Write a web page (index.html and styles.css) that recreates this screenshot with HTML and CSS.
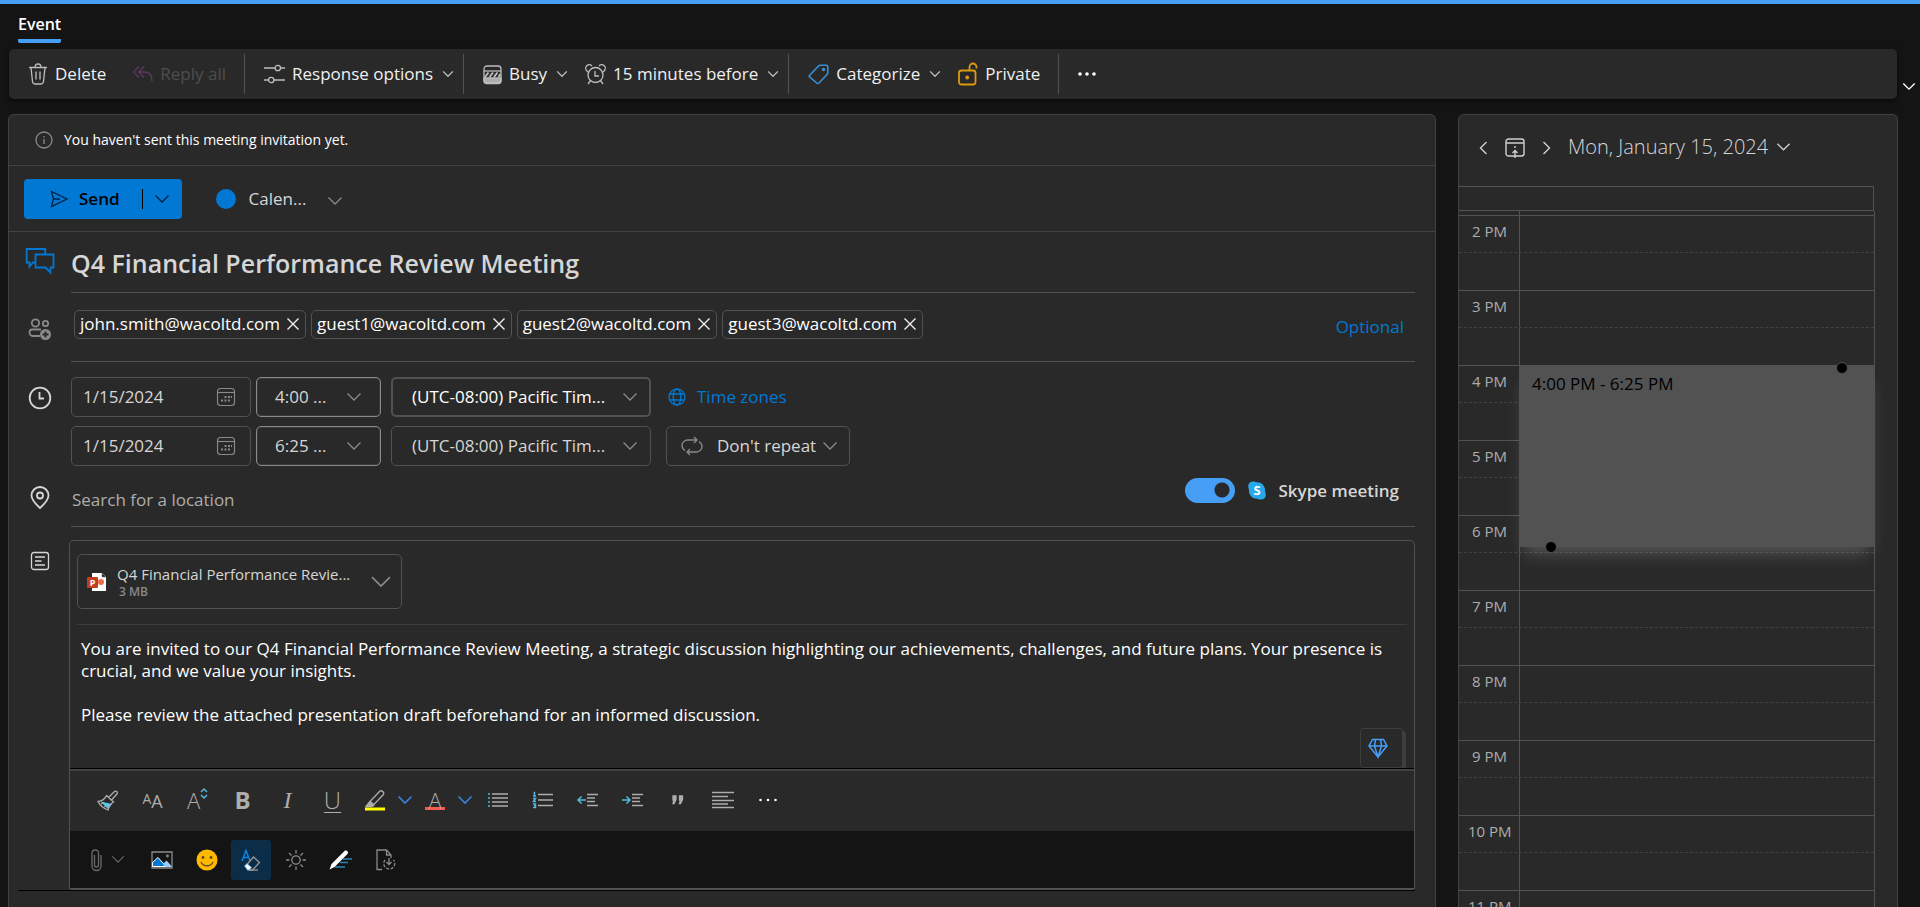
FILE: index.html
```html
<!DOCTYPE html>
<html lang="en">
<head>
<meta charset="utf-8">
<title>Event</title>
<link rel="stylesheet" href="styles.css">
</head>
<body>
<svg class="defs" aria-hidden="true">
  <symbol id="chev" viewBox="0 0 16 10"><path d="M1.500 1.500 8 8l6.500-6.500"/></symbol>
  <symbol id="close" viewBox="0 0 14 14"><path d="M1.500 1.500l11 11M12.500 1.500l-11 11"/></symbol>
  <symbol id="cal" viewBox="0 0 20 20"><rect x="1.500" y="1.500" width="17" height="17" rx="3"/><path d="M1.500 5.500h17"/><path stroke-width="2" d="M8.500 10h2M12 10h2M15 10h1M5 13.500h2M8.500 13.500h2M12 13.500h2"/></symbol>
</svg>
<header class="tabs"><a class="tab" href="#event">Event</a></header>

<div class="ribbon-row">
  <nav class="ribbon" id="event">
    <div class="group">
      <button class="cmd"><svg width="20" height="22" viewBox="0 0 20 22"><path d="M1 4.500h18M7 4.500C7 2 8 1 10 1s3 1 3 3.500M3 4.500l1.500 14c.2 1.500 1 2.500 2.500 2.500h6c1.500 0 2.300-1 2.500-2.500L17 4.500M8 8.500v8M12 8.500v8"/></svg><span>Delete</span></button>
      <button class="cmd disabled" disabled><svg class="purple" width="21" height="18" viewBox="0 0 21 18"><path d="M7 1.500 1.500 7 7 12.500M12 1.500 6.500 7l5.500 5.500M6.500 7h6c5 0 7.500 4 7.500 9.500"/></svg><span>Reply all</span></button>
    </div>
    <div class="group">
      <button class="cmd"><svg width="21" height="20" viewBox="0 0 21 20"><path d="M0 4h11M16.500 4H21M0 16h4.500M10 16h11"/><circle cx="13.800" cy="4" r="2.700"/><circle cx="7.200" cy="16" r="2.700"/></svg><span>Response options</span><svg class="chev" width="12" height="8"><use href="#chev"/></svg></button>
    </div>
    <div class="group">
      <button class="cmd"><svg width="19" height="19" viewBox="0 0 19 19"><path class="fill" d="M1 13h17v3a2.500 2.500 0 0 1-2.500 2.500h-12A2.500 2.500 0 0 1 1 16z"/><rect x="1" y="1" width="17" height="17" rx="3"/><path d="M1 6h17"/><path stroke-width="2" d="M2 12l3.500-4.500M6.500 12 10 7.500M11 12l3.500-4.500M15.500 12l2-3"/></svg><span>Busy</span><svg class="chev" width="12" height="8"><use href="#chev"/></svg></button>
      <button class="cmd"><svg width="21" height="21" viewBox="0 0 21 21"><circle cx="10.500" cy="11" r="7.500"/><path d="M10 7v5h4M5.500 16.500 3 20M15.500 16.500 18 20M1.500 6.500A3.500 3.500 0 0 1 7 2M19.500 6.500A3.500 3.500 0 0 0 14 2M1.500 6.500 3 8M19.500 6.500 18 8"/></svg><span>15 minutes before</span><svg class="chev" width="12" height="8"><use href="#chev"/></svg></button>
    </div>
    <div class="group">
      <button class="cmd"><svg class="blue" width="21" height="21" viewBox="0 0 21 21"><path d="M1.500 11.500 10.500 2c.5-.6 1-.8 1.700-.8h6c1 0 1.600.6 1.600 1.600v6c0 .7-.3 1.200-.8 1.700l-8 8.500c-.7.700-1.600.700-2.300 0l-7-6c-.8-.7-.8-1-.2-1.500z"/><circle cx="15.500" cy="5.500" r="1"/></svg><span>Categorize</span><svg class="chev" width="12" height="8"><use href="#chev"/></svg></button>
      <button class="cmd"><svg class="gold" width="20" height="24" viewBox="0 0 20 24"><rect x="1" y="8.500" width="16.500" height="14" rx="2.500"/><path d="M11.500 8.500V5a3.500 3.500 0 0 1 7 0v1.500"/><circle cx="9.200" cy="15.500" r="1"/></svg><span>Private</span></button>
    </div>
    <div class="group"><button class="cmd" aria-label="More commands"><svg width="18" height="4" viewBox="0 0 18 4"><g class="white-fill"><circle cx="2" cy="2" r="1.800"/><circle cx="9" cy="2" r="1.800"/><circle cx="16" cy="2" r="1.800"/></g></svg></button></div>
  </nav>
  <button class="expand" aria-label="Ribbon options"><svg width="14" height="9"><use href="#chev"/></svg></button>
</div>

<main class="columns">
  <section class="compose">
    <div class="notice"><svg width="18" height="18" viewBox="0 0 18 18"><circle cx="9" cy="9" r="8"/><path d="M9 8v5M9 5v1.500"/></svg><span>You haven't sent this meeting invitation yet.</span></div>
    <div class="sendbar">
      <div class="send">
        <button class="send-main"><svg width="18" height="18" viewBox="0 0 18 18"><path d="M1.500 1.500 17 9 1.500 16.500 3.500 9zM3.500 9H10"/></svg><span>Send</span></button>
        <button class="send-more" aria-label="Send options"><svg width="16" height="10"><use href="#chev"/></svg></button>
      </div>
      <button class="calendar"><i class="dot"></i><span>Calen...</span><svg width="16" height="10"><use href="#chev"/></svg></button>
    </div>

    <form class="form">
      <div class="row">
        <div class="ico"><svg class="accent" width="30" height="28" viewBox="0 0 30 28"><path d="M10 15.500H8l-3.500 4v-4H1.700V2h18.500v4.500M10.500 7.500H28.500V20.500H25.500V25.500L20.500 20.500H10.500z"/></svg></div>
        <div class="field title-field"><input class="title" aria-label="Title" value="Q4 Financial Performance Review Meeting"></div>
      </div>
      <div class="row">
        <div class="ico people"><svg width="24" height="24" viewBox="0 0 24 24"><circle cx="7.500" cy="6" r="3.700"/><circle cx="17.500" cy="6.500" r="2.700"/><path d="M12 19H5.500C3 19 1.500 17.500 1.500 15.500S2.500 12.500 4 12.500h9"/><circle class="fill" cx="17.500" cy="17.500" r="5.500"/><path class="cut" d="M17.500 14.500v6M14.500 17.500h6"/></svg></div>
        <div class="field guests">
          <span class="chip">john.smith@wacoltd.com<button type="button" aria-label="Remove john.smith"><svg width="14" height="14"><use href="#close"/></svg></button></span>
          <span class="chip">guest1@wacoltd.com<button type="button" aria-label="Remove guest1"><svg width="14" height="14"><use href="#close"/></svg></button></span>
          <span class="chip">guest2@wacoltd.com<button type="button" aria-label="Remove guest2"><svg width="14" height="14"><use href="#close"/></svg></button></span>
          <span class="chip">guest3@wacoltd.com<button type="button" aria-label="Remove guest3"><svg width="14" height="14"><use href="#close"/></svg></button></span>
          <a class="optional" href="#optional">Optional</a>
        </div>
      </div>
      <div class="row">
        <div class="ico clock"><svg class="light thick" width="24" height="24" viewBox="0 0 24 24"><circle cx="12" cy="12" r="10.300"/><path d="M11.500 6v6.500H16"/></svg></div>
        <div class="times">
          <div class="time-row">
            <label class="box date"><input aria-label="Start date" value="1/15/2024"><svg width="20" height="20"><use href="#cal"/></svg></label>
            <label class="box time"><select aria-label="Start time"><option>4:00 ...</option></select><svg width="16" height="10"><use href="#chev"/></svg></label>
            <label class="box zone strong"><select aria-label="Start time zone"><option>(UTC-08:00) Pacific Tim...</option></select><svg width="16" height="10"><use href="#chev"/></svg></label>
            <a class="zones" href="#zones"><svg width="18" height="18" viewBox="0 0 18 18"><circle cx="9" cy="9" r="8"/><ellipse cx="9" cy="9" rx="3.800" ry="8"/><path d="M2 6h14M2 12h14"/></svg><span>Time zones</span></a>
          </div>
          <div class="time-row">
            <label class="box date"><input aria-label="End date" value="1/15/2024"><svg width="20" height="20"><use href="#cal"/></svg></label>
            <label class="box time"><select aria-label="End time"><option>6:25 ...</option></select><svg width="16" height="10"><use href="#chev"/></svg></label>
            <label class="box zone"><select aria-label="End time zone"><option>(UTC-08:00) Pacific Tim...</option></select><svg width="16" height="10"><use href="#chev"/></svg></label>
            <label class="box repeat"><svg class="loop" width="22" height="20" viewBox="0 0 22 20"><path d="M4 14.500C1.500 13 1 11 1 9.500 1 6.500 3.500 4 6.500 4h9M13 1l3 3-3 3M18 5.500c2.500 1.500 3 3.500 3 5 0 3-2.500 5.500-5.500 5.500h-9M9 13l-3 3 3 3"/></svg><select aria-label="Repeat"><option>Don't repeat</option></select><svg width="16" height="10"><use href="#chev"/></svg></label>
          </div>
        </div>
      </div>
      <div class="row">
        <div class="ico pin"><svg class="light thick" width="20" height="24" viewBox="0 0 20 24"><path d="M10 22C5 17.500 1.500 14 1.500 9.500a8.500 8.500 0 0 1 17 0C18.500 14 15 17.500 10 22z"/><circle cx="10" cy="9.500" r="3"/></svg></div>
        <div class="field location">
          <input aria-label="Location" placeholder="Search for a location">
          <label class="skype"><input type="checkbox" checked><svg width="18" height="19" viewBox="0 0 18 19"><path fill="#28a8ea" stroke="none" d="M5 .5c2 0 2.500.7 4 .7 4.500 0 8 3.500 8 8 0 1.500.8 2.500.8 4.500 0 2.800-2 4.800-4.800 4.800-2 0-2.500-.8-4-.8-4.500 0-8-3.500-8-8 0-1.500-.8-2.500-.8-4.400C.2 2.500 2.200.5 5 .5z"/><text x="9" y="14" text-anchor="middle" font-size="13">S</text></svg><span>Skype meeting</span></label>
        </div>
      </div>
      <div class="row editor-row">
        <div class="ico note"><svg class="light" width="20" height="20" viewBox="0 0 20 20"><rect x="1.500" y="1.500" width="17" height="17" rx="2.500"/><path d="M5 6h10M5 10h6.500M5 14h10"/></svg></div>
        <div class="editor">
          <div class="attachments">
            <button type="button" class="attachment">
              <svg width="20" height="20" viewBox="0 0 20 20"><path fill="#fff" stroke="none" d="M5 1h10l4 4v14H5z"/><path fill="#292929" stroke="#777" stroke-width=".6" d="M15 1v4h4z"/><circle cx="14" cy="10" r="3" fill="#f06a48" stroke="none"/><rect x="0" y="5" width="11" height="11" rx="1" fill="#c43e1c" stroke="none"/><text x="5.500" y="14" text-anchor="middle" font-size="9">P</text></svg>
              <span class="file"><span>Q4 Financial Performance Revie...</span><small>3 MB</small></span>
              <svg class="big" width="22" height="14"><use href="#chev"/></svg>
            </button>
          </div>
          <div class="body" contenteditable="true">
            <p>You are invited to our Q4 Financial Performance Review Meeting, a strategic discussion highlighting our achievements, challenges, and future plans. Your presence is crucial, and we value your insights.</p>
            <p>Please review the attached presentation draft beforehand for an informed discussion.</p>
          </div>
          <button type="button" class="gem" aria-label="Suggestions"><svg width="20" height="20" viewBox="0 0 20 20"><path d="M4.500 1.500h11L19 8l-9 11L1 8zM1 8h18M7.500 1.500 6.500 8 10 19l3.500-11-1-6.500"/></svg></button>
          <div class="format">
            <button type="button" aria-label="Format painter"><svg width="22" height="21" viewBox="0 0 22 21"><path fill="#50c8f5" stroke="none" d="M3.500 11.500 15 14l-4 5z"/><path d="M1 11.500C5 11 8 9 9.500 5.500l7 6.500c-2.500 1.500-4.500 4.500-5.500 8C7 18.500 3 15.500 1 11.500zM11.500 7.500 17.500 1.500c1.500-1.200 3.700.7 2.600 2.300L14.500 10M4 14l3-1.500M7.500 17l2-2"/></svg></button>
            <button type="button" class="letter" aria-label="Font"><span class="aa"><small>A</small>A</span></button>
            <button type="button" class="letter" aria-label="Font size"><span class="thin">A</span><svg class="cyan updown" width="8" height="11" viewBox="0 0 8 11"><path d="M1 4l3-3 3 3M1 7l3 3 3-3"/></svg></button>
            <button type="button" class="letter bold" aria-label="Bold">B</button>
            <button type="button" class="letter italic" aria-label="Italic">I</button>
            <button type="button" class="letter under" aria-label="Underline">U</button>
            <button type="button" class="split" aria-label="Highlight"><svg width="22" height="22" viewBox="0 0 22 22"><path d="M6 12.500 15.500 2.500c2-2 5.500 1 3.700 3.200L10 15.500z"/><path class="fill" d="M2 17.500 5.500 13l4 3.500-2 1z"/><path fill="#ff0" stroke="none" d="M1 18.500h20v3H1z"/></svg></button>
            <button type="button" class="drop" aria-label="Highlight colors"><svg width="16" height="10"><use href="#chev"/></svg></button>
            <button type="button" class="split fontcolor" aria-label="Font color">A</button>
            <button type="button" class="drop" aria-label="Font colors"><svg width="16" height="10"><use href="#chev"/></svg></button>
            <button type="button" aria-label="Bullets"><svg width="20" height="16" viewBox="0 0 20 16"><path d="M4 2h16M4 6h16M4 10h16M4 14h16"/><path class="cy" d="M0 2h2M0 6h2M0 10h2M0 14h2"/></svg></button>
            <button type="button" aria-label="Numbering"><svg width="20" height="16" viewBox="0 0 20 16"><path d="M5 2.500h15M5 8h15M5 13.500h15"/><path class="cy" d="M.5.500h1V4M0 4h3M0 6.500h2.500L.5 9.500H3M0 12h2.500v3.500H0M1 13.700h1.500"/></svg></button>
            <button type="button" aria-label="Decrease indent"><svg width="21" height="16" viewBox="0 0 21 16"><path d="M10 2.500h11M10 6h8M10 9.500h8M10 13.500h11"/><path class="cy" d="M9 8H1M4.500 4.500 1 8l3.500 3.500"/></svg></button>
            <button type="button" aria-label="Increase indent"><svg width="21" height="16" viewBox="0 0 21 16"><path d="M10 2.500h11M10 6h8M10 9.500h8M10 13.500h11"/><path class="cy" d="M0 8h8M4.500 4.500 8 8l-3.500 3.500"/></svg></button>
            <button type="button" aria-label="Quote"><svg width="12" height="10" viewBox="0 0 12 10"><path class="fill" d="M1 1h3v3.500L2 8.500H1L2 5H1zM7.500 1h3v3.500L8.500 8.500h-1l1-3.500h-1z"/></svg></button>
            <button type="button" aria-label="Align"><svg width="22" height="18" viewBox="0 0 22 18"><path d="M0 1.500h22M0 5.500h16M0 9.500h22M0 13h16M0 16.500h22"/></svg></button>
            <button type="button" aria-label="More formatting"><svg width="20" height="4" viewBox="0 0 20 4"><g class="white-fill"><circle cx="2.500" cy="2" r="1.300"/><circle cx="10" cy="2" r="1.300"/><circle cx="17.500" cy="2" r="1.300"/></g></svg></button>
          </div>
          <div class="insert">
            <button type="button" class="attach" aria-label="Attach"><svg width="12" height="22" viewBox="0 0 12 22"><path d="M3.500 6v10a2 2 0 0 0 4 0V4.500a3 3 0 0 0-2.500-3.500h-1A3 3 0 0 0 1 4.500V17a4 4 0 0 0 9 0V6"/></svg><svg width="14" height="9"><use href="#chev"/></svg></button>
            <button type="button" aria-label="Picture"><svg width="22" height="18" viewBox="0 0 22 18"><path d="M1 1h20v16H1z"/><path fill="#0078d4" stroke="#fff" stroke-width="1" d="M1.500 15.500v-4L7 6.500l8 9z"/><path fill="#9cf" stroke="none" d="M12 13l3.500-3.500L20.500 15v1h-6z"/><circle cx="16.500" cy="5" r=".8"/></svg></button>
            <button type="button" aria-label="Emoji"><svg width="22" height="22" viewBox="0 0 22 22"><circle cx="11" cy="11" r="10.500" fill="#ffb900" stroke="none"/><g fill="#5a4a20" stroke="none"><circle cx="7" cy="8.500" r="1.400"/><circle cx="15" cy="8.500" r="1.400"/></g><path stroke="#5a4a20" d="M5 13c2 5 10 5 12 0"/></svg></button>
            <button type="button" class="active" aria-label="Formatting options"><svg width="20" height="22" viewBox="0 0 20 22"><path stroke="#0f86e0" stroke-width="1.500" d="M1 12 5 1.500 9 12M2.500 8.500h5"/><path stroke="#999" d="M5 16.500 12.500 8l6 5.500-7 7.500H7z"/><path fill="#fff" stroke="#3c9be8" stroke-width=".8" d="M3.500 17 6 14.500l4.500 4L8.500 21H6.500z"/><path stroke="#999" d="M8 21h9"/></svg></button>
            <button type="button" aria-label="Dark mode"><svg width="20" height="20" viewBox="0 0 20 20"><circle cx="10" cy="10" r="4.200"/><path d="M10 0v3.500M10 16.500V20M0 10h3.500M16.500 10H20M3 3l2.500 2.500M14.500 14.500 17 17M17 3l-2.500 2.500M5.500 14.500 3 17"/></svg></button>
            <button type="button" aria-label="Signature"><svg width="23" height="20" viewBox="0 0 23 20"><path stroke="#2a86b8" stroke-width="1.300" d="M14 9h9M11 12.500h8M6 17h10"/><path fill="#fff" stroke="none" d="M.5 19.500 2.500 14 15.500 1c2-1.500 4.500 1 3 3L5.500 17z"/></svg></button>
            <button type="button" aria-label="Loop component"><svg width="20" height="22" viewBox="0 0 20 22"><path d="M6 20.500H1V1h9.500L15 6v3M10.500 1v5H15"/><path stroke-dasharray="3 1.500" d="M9 11a5.500 5.500 0 1 0 8.500 0"/><path d="M13 9v6M10.500 13l2.500 2.500 2.500-2.500"/></svg></button>
          </div>
        </div>
      </div>
      <div class="below"></div>
    </form>
  </section>

  <aside class="agenda">
    <div class="agenda-head">
      <button aria-label="Previous day"><svg width="9" height="14" viewBox="0 0 9 14"><path d="M7.500 1 1.500 7l6 6"/></svg></button>
      <button aria-label="Today"><svg width="20" height="20" viewBox="0 0 20 20"><rect x="1" y="1" width="18" height="17" rx="2.500"/><path d="M1 5h18M10 20v-7M7.500 15 10 12.500l2.500 2.500M10 8v2"/></svg></button>
      <button aria-label="Next day"><svg width="9" height="14" viewBox="0 0 9 14"><path d="M1.500 1l6 6-6 6"/></svg></button>
      <button class="day"><span>Mon, January 15, 2024</span><svg width="15" height="10"><use href="#chev"/></svg></button>
    </div>
    <div class="allday"></div>
    <div class="grid">
      <div class="gap"></div>
      <div class="hour"><span>2 PM</span></div>
      <div class="hour"><span>3 PM</span></div>
      <div class="hour"><span>4 PM</span></div>
      <div class="hour"><span>5 PM</span></div>
      <div class="hour"><span>6 PM</span></div>
      <div class="hour"><span>7 PM</span></div>
      <div class="hour"><span>8 PM</span></div>
      <div class="hour"><span>9 PM</span></div>
      <div class="hour"><span>10 PM</span></div>
      <div class="hour"><span>11 PM</span></div>
      <div class="event">4:00 PM - 6:25 PM<i class="handle start"></i><i class="handle end"></i></div>
    </div>
  </aside>
</main>
</body>
</html>
```
FILE: styles.css
```css
* { box-sizing: border-box; }

body {
  margin: 0;
  height: 100vh;
  display: flex;
  flex-direction: column;
  overflow: hidden;
  border-top: 4px solid #479ef5;
  background: #141414;
  color: #d6d6d6;
  font: 17px/24px "Open Sans", "Noto Sans", sans-serif;
}

button, input, select {
  margin: 0;
  padding: 0;
  border: 0;
  background: none;
  color: inherit;
  font: inherit;
}
button { display: flex; align-items: center; justify-content: center; flex: none; }
select { appearance: none; flex: 1; min-width: 0; }
input { min-width: 0; }
a { color: #0078d4; text-decoration: none; }
svg { flex: none; display: block; fill: none; stroke: #8a8a8a; stroke-width: 1.3; overflow: visible; }
svg text { fill: #fff; stroke: none; font-weight: 700; }
.defs { position: absolute; width: 0; height: 0; }
.fill { fill: #adadad; }
.white-fill { fill: #fff; stroke: none; }
.light { stroke: #d6d6d6; }
.thick { stroke-width: 1.8; }

/* tab strip */
.tabs { padding: 8px 18px 0; height: 45px; flex: none; display: flex; }
.tab { height: 31px; border-bottom: 4px solid #479ef5; border-radius: 2px; color: #fff; font-size: 16px; font-weight: 600; }

/* ribbon */
.ribbon-row { display: flex; flex: none; align-items: flex-end; padding-left: 9px; }
.ribbon { flex: 1; height: 50px; display: flex; align-items: center; border-radius: 5px; background: #292929; box-shadow: 0 2px 4px #0008; }
.group { height: 40px; display: flex; padding: 0 9px; gap: 7px; border-right: 1px solid #525252; }
.group:last-child { border: 0; }
.cmd { padding: 0 9px 0 10px; gap: 7px; color: #f0f0f0; }
.cmd svg { stroke: #bdbdbd; }
.cmd .chev { margin-left: 2px; stroke-width: 1.8; }
.cmd:has(.chev) { padding-right: 0; }
.disabled { color: #4e4e4e; }
.cmd .purple { stroke: #5b3a5e; }
.cmd .blue { stroke: #3a8fd6; stroke-width: 1.6; }
.cmd .gold { stroke: #dc9a13; stroke-width: 1.8; }
.expand { width: 23px; height: 26px; }
.expand svg { stroke: #fff; stroke-width: 1.6; }

/* columns */
.columns { flex: 1; min-height: 0; display: flex; gap: 22px; padding: 15px 22px 0 8px; }
.compose, .agenda { overflow: hidden; background: #292929; border: 1px solid #424242; border-bottom: 0; border-radius: 6px 6px 0 0; }
.compose { flex: 1; min-width: 0; }
.agenda { width: 440px; flex: none; }

.notice { height: 51px; padding-left: 26px; display: flex; align-items: center; gap: 11px; border-bottom: 1px solid #424242; color: #fff; font-size: 14px; }
.sendbar { height: 66px; padding-left: 15px; display: flex; align-items: center; gap: 34px; border-bottom: 1px solid #424242; }
.send { height: 40px; display: flex; border-radius: 4px; background: #0078d4; color: #000; }
.send svg { stroke: #00203c; }
.send-main { padding: 0 22px 0 26px; gap: 11px; font-weight: 600; }
.send-more { width: 40px; position: relative; }
.send-more::before { content: ""; position: absolute; left: 0; top: 10px; height: 20px; border-left: 1px solid #000; }
.calendar { gap: 13px; }
.calendar svg { margin: 4px 0 0 8px; }
.dot { width: 20px; height: 20px; border-radius: 50%; background: #0078d4; }

/* form */
.row { display: flex; padding-right: 20px; }
.ico { width: 62px; flex: none; display: flex; justify-content: center; align-items: flex-start; }
.accent { stroke: #0078d4; stroke-width: 1.8; margin-top: 15px; }
.people { padding-top: 24px; }
.people svg { stroke-width: 1.8; }
.people .fill { fill: #8a8a8a; stroke: none; }
.people .cut { stroke: #292929; }
.clock { padding-top: 24px; }
.pin { padding-top: 20px; }
.note { width: 60px; padding: 11px 0 0 2px; }
.field { flex: 1; min-width: 0; display: flex; border-bottom: 1px solid #525252; }
.title-field { height: 61px; }
.title { width: 100%; height: 60px; padding-top: 2px; font-size: 25px; font-weight: 600; }
.guests { height: 69px; padding: 17px 11px 0 3px; gap: 5px; align-items: flex-start; color: #fff; }
.chip { height: 29px; padding: 0 5px 2px 5px; display: flex; align-items: center; gap: 6px; border: 1px solid #525252; border-radius: 5px; }
.chip svg { stroke: #f0f0f0; stroke-width: 1.4; }
.optional { margin: 5px 0 0 auto; }

.times { flex: 1; padding-top: 15px; display: grid; gap: 9px; }
.time-row { display: flex; align-items: center; }
.box { height: 40px; padding: 0 14px 0 11px; display: flex; align-items: center; border: 1px solid #525252; border-radius: 5px; }
.date { width: 180px; margin-right: 5px; }
.date input { flex: 1; }
.date svg { stroke-width: 1.1; }
.time { width: 125px; margin-right: 10px; padding: 0 18px; border-color: #8a8a8a; box-shadow: inset 0 0 0 1px #3a3a3a; }
.zone { width: 260px; margin-right: 15px; padding: 0 12px 0 20px; }
.strong { border-width: 2px; padding: 0 11px 0 19px; color: #fff; }
.repeat { width: 184px; padding: 0 11px 0 14px; }
.loop { margin-right: 14px; }
.zones { display: flex; align-items: center; gap: 11px; margin-left: 2px; }
.zones svg { stroke: #0078d4; }

.location { height: 61px; padding: 12px 16px 14px 1px; align-items: flex-end; }
.location > input { flex: 1; }
.location input::placeholder { color: #adadad; opacity: 1; }
.skype { align-self: flex-start; display: flex; align-items: center; gap: 13px; font-weight: 600; }
.skype input { appearance: none; width: 50px; height: 25px; border-radius: 13px; background: radial-gradient(circle at 37px 12px, #292929 7px, #479ef5 8px); }

/* editor */
.editor-row { padding-top: 13px; }
.editor { flex: 1; min-width: 0; position: relative; border: 1px solid #525252; border-bottom-width: 2px; border-radius: 5px 5px 3px 3px; }
.attachments { margin: 0 7px; padding: 13px 0 15px; border-bottom: 1px solid #3d3d3d; }
.attachment { width: 325px; height: 55px; padding: 0 9px; border: 1px solid #525252; border-radius: 5px; text-align: left; }
.file { flex: 1; margin-left: 10px; padding-top: 2px; display: flex; flex-direction: column; font-size: 15px; line-height: 19px; white-space: nowrap; }
.file small { padding-left: 2px; color: #8a8a8a; font-size: 12px; font-weight: 600; line-height: 16px; }
.big { stroke-width: 1.2; }
.body { min-height: 143px; padding: 13px 30px 0 11px; color: #fff; font-size: 17px; font-weight: 500; line-height: 22px; }
.body p { margin: 0 0 22px; }
.gem { position: absolute; right: 11px; top: 187px; width: 43px; height: 40px; padding: 0 8px 0 0; border: 1px solid #3d3d3d; border-radius: 3px; box-shadow: 3px 3px 0 #3d3d3d; background: #292929; }
.gem svg { stroke: #479ef5; stroke-width: 1.5; }

.format { position: relative; height: 63px; padding-left: 15px; display: flex; align-items: stretch; border-top: 1px solid #000; box-shadow: inset 0 2px 0 #424242; }
.format button, .insert button { width: 45px; }
.format svg { stroke: #adadad; }
.format button.split { width: 40px; }
.format button.drop { width: 20px; }
.format .drop svg { stroke: #3b82e0; stroke-width: 1.6; }
.format .cy, .format .cyan { stroke: #50b8e0; stroke-width: 1.5; }
.letter { color: #adadad; font-size: 24px; line-height: 24px; }
.letter small { font-size: 14px; vertical-align: 4px; }
.aa { font-size: 18px; font-weight: 400; }
.thin { font-size: 22px; font-weight: 300; }
.updown { margin-bottom: 14px; }
.bold { font-weight: 700; }
.italic { font-family: "Liberation Serif", serif; font-style: italic; }
.under { font-weight: 300; text-decoration: underline; text-underline-offset: 3px; text-decoration-thickness: 1px; }
.fontcolor { color: #adadad; font-size: 22px; font-weight: 300; background: linear-gradient(#f15b50, #f15b50) 10px 38px / 20px 3px no-repeat; }
.insert { height: 57px; padding-left: 11px; display: flex; align-items: center; background: #141414; }
.insert button.attach { width: 58px; gap: 8px; padding-right: 4px; }
.insert .attach svg { stroke: #6a6a6a; }
.insert button.active { width: 40px; height: 40px; margin: 0 2px; border-radius: 3px; background: #0c2d48; }
.below { margin: 0 20px 0 9px; border-top: 1px solid #000; }

/* agenda */
.agenda-head { height: 71px; padding: 0 20px 5px; display: flex; align-items: center; }
.agenda-head button { margin-right: 17px; }
.agenda-head svg { stroke: #d0d0d0; stroke-width: 1.4; }
.agenda-head .day { margin: 0 0 3px; gap: 8px; font-size: 20px; font-weight: 300; }
.allday { height: 25px; margin-right: 23px; border: 1px solid #525252; border-left: 0; }
.grid { position: relative; margin-right: 22px; border-right: 1px solid #525252; background: linear-gradient(#525252, #525252) 60px 0 / 1px 100% no-repeat; }
.gap { height: 4px; }
.hour { height: 75px; border-top: 1px solid #525252; color: #adadad; font-size: 15px; line-height: 20px; }
.hour span { display: block; height: 37px; padding: 5px 0 0 13px; border-bottom: 1px dashed #424242; }
.hour:nth-child(n+10) span { padding-left: 9px; }
.event { position: absolute; left: 60px; right: -1px; top: 155px; height: 181px; padding: 6px 13px; border-radius: 2px; background: #525252; color: #000; font-size: 17px; font-weight: 500; box-shadow: 0 12px 16px -6px #ffffff38; }
.handle { position: absolute; width: 12px; height: 12px; border: 1px solid #525252; border-radius: 50%; background: #000; }
.start { right: 27px; top: -4px; }
.end { left: 26px; bottom: -6px; }
```
